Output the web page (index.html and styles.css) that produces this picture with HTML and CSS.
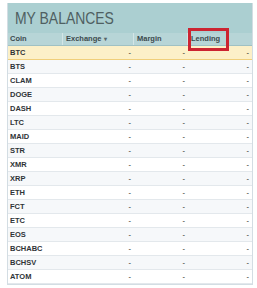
FILE: index.html
```html
<!DOCTYPE html>
<html>
<head>
<meta charset="utf-8">
<link rel="stylesheet" href="styles.css">
</head>
<body>
<div class="panel">
  <div class="title"><span class="title-text">MY BALANCES</span></div>
  <div class="row head">
    <div class="c coin">Coin</div>
    <div class="c ex">Exchange <span class="caret">▾</span></div>
    <div class="c mg">Margin</div>
    <div class="c ld">Lending</div>
  </div>
  <div class="row sel"><div class="c coin">BTC</div><div class="c ex v">-</div><div class="c mg v">-</div><div class="c ld v">-</div></div>
  <div class="row alt"><div class="c coin">BTS</div><div class="c ex v">-</div><div class="c mg v">-</div><div class="c ld v">-</div></div>
  <div class="row"><div class="c coin">CLAM</div><div class="c ex v">-</div><div class="c mg v">-</div><div class="c ld v">-</div></div>
  <div class="row alt"><div class="c coin">DOGE</div><div class="c ex v">-</div><div class="c mg v">-</div><div class="c ld v">-</div></div>
  <div class="row"><div class="c coin">DASH</div><div class="c ex v">-</div><div class="c mg v">-</div><div class="c ld v">-</div></div>
  <div class="row alt"><div class="c coin">LTC</div><div class="c ex v">-</div><div class="c mg v">-</div><div class="c ld v">-</div></div>
  <div class="row"><div class="c coin">MAID</div><div class="c ex v">-</div><div class="c mg v">-</div><div class="c ld v">-</div></div>
  <div class="row alt"><div class="c coin">STR</div><div class="c ex v">-</div><div class="c mg v">-</div><div class="c ld v">-</div></div>
  <div class="row"><div class="c coin">XMR</div><div class="c ex v">-</div><div class="c mg v">-</div><div class="c ld v">-</div></div>
  <div class="row alt"><div class="c coin">XRP</div><div class="c ex v">-</div><div class="c mg v">-</div><div class="c ld v">-</div></div>
  <div class="row"><div class="c coin">ETH</div><div class="c ex v">-</div><div class="c mg v">-</div><div class="c ld v">-</div></div>
  <div class="row alt"><div class="c coin">FCT</div><div class="c ex v">-</div><div class="c mg v">-</div><div class="c ld v">-</div></div>
  <div class="row"><div class="c coin">ETC</div><div class="c ex v">-</div><div class="c mg v">-</div><div class="c ld v">-</div></div>
  <div class="row alt"><div class="c coin">EOS</div><div class="c ex v">-</div><div class="c mg v">-</div><div class="c ld v">-</div></div>
  <div class="row"><div class="c coin">BCHABC</div><div class="c ex v">-</div><div class="c mg v">-</div><div class="c ld v">-</div></div>
  <div class="row alt"><div class="c coin">BCHSV</div><div class="c ex v">-</div><div class="c mg v">-</div><div class="c ld v">-</div></div>
  <div class="row"><div class="c coin">ATOM</div><div class="c ex v">-</div><div class="c mg v">-</div><div class="c ld v">-</div></div>
  <div class="mark"></div>
</div>
</body>
</html>
```

FILE: styles.css
```css
html, body {
  margin: 0;
  padding: 0;
  background: #ffffff;
}
body {
  font-family: "Liberation Sans", Arial, sans-serif;
}
.panel {
  position: relative;
  margin: 3px 0 0 7px;
  width: 246px;
  border-left: 1px solid #d3dde3;
  border-right: 1px solid #d3dde3;
  border-bottom: 1px solid #d3dde3;
  box-sizing: border-box;
}
.title {
  height: 30px;
  background: #abcfd1;
  color: #4f5f62;
  line-height: 31px;
  padding-left: 7px;
  box-sizing: border-box;
}
.title-text {
  display: inline-block;
  font-size: 17px;
  transform: scaleX(0.82);
  transform-origin: left center;
}
.row {
  display: grid;
  grid-template-columns: 55px 71px 54px 1fr;
  height: 14px;
  border-bottom: 1px solid #e3e8ec;
  box-sizing: border-box;
  font-size: 7.5px;
  font-weight: bold;
  color: #2f3437;
  line-height: 13px;
  background: #ffffff;
}
.row.alt {
  background: #f6f8fa;
}
.row.sel {
  background: #fcf0c8;
  border-bottom: 1px solid #f0cf7a;
}
.row.head {
  height: 13px;
  background: #b7d5d7;
  border-bottom: 1px solid #9fc1c4;
  color: #3b4a4d;
  line-height: 12px;
}
.head .c {
  border-right: 1px solid #d3e5e6;
}
.head .c:last-child {
  border-right: none;
}
.c {
  padding: 0 3px;
  overflow: hidden;
  white-space: nowrap;
}
.coin {
  padding-left: 2px;
}
.v {
  text-align: right;
  font-weight: normal;
  color: #222;
}
.caret {
  font-size: 6px;
  color: #56666a;
}
.mark {
  position: absolute;
  left: 180px;
  top: 25px;
  width: 41px;
  height: 23px;
  border: 3px solid #cc2431;
  box-sizing: border-box;
}
```
